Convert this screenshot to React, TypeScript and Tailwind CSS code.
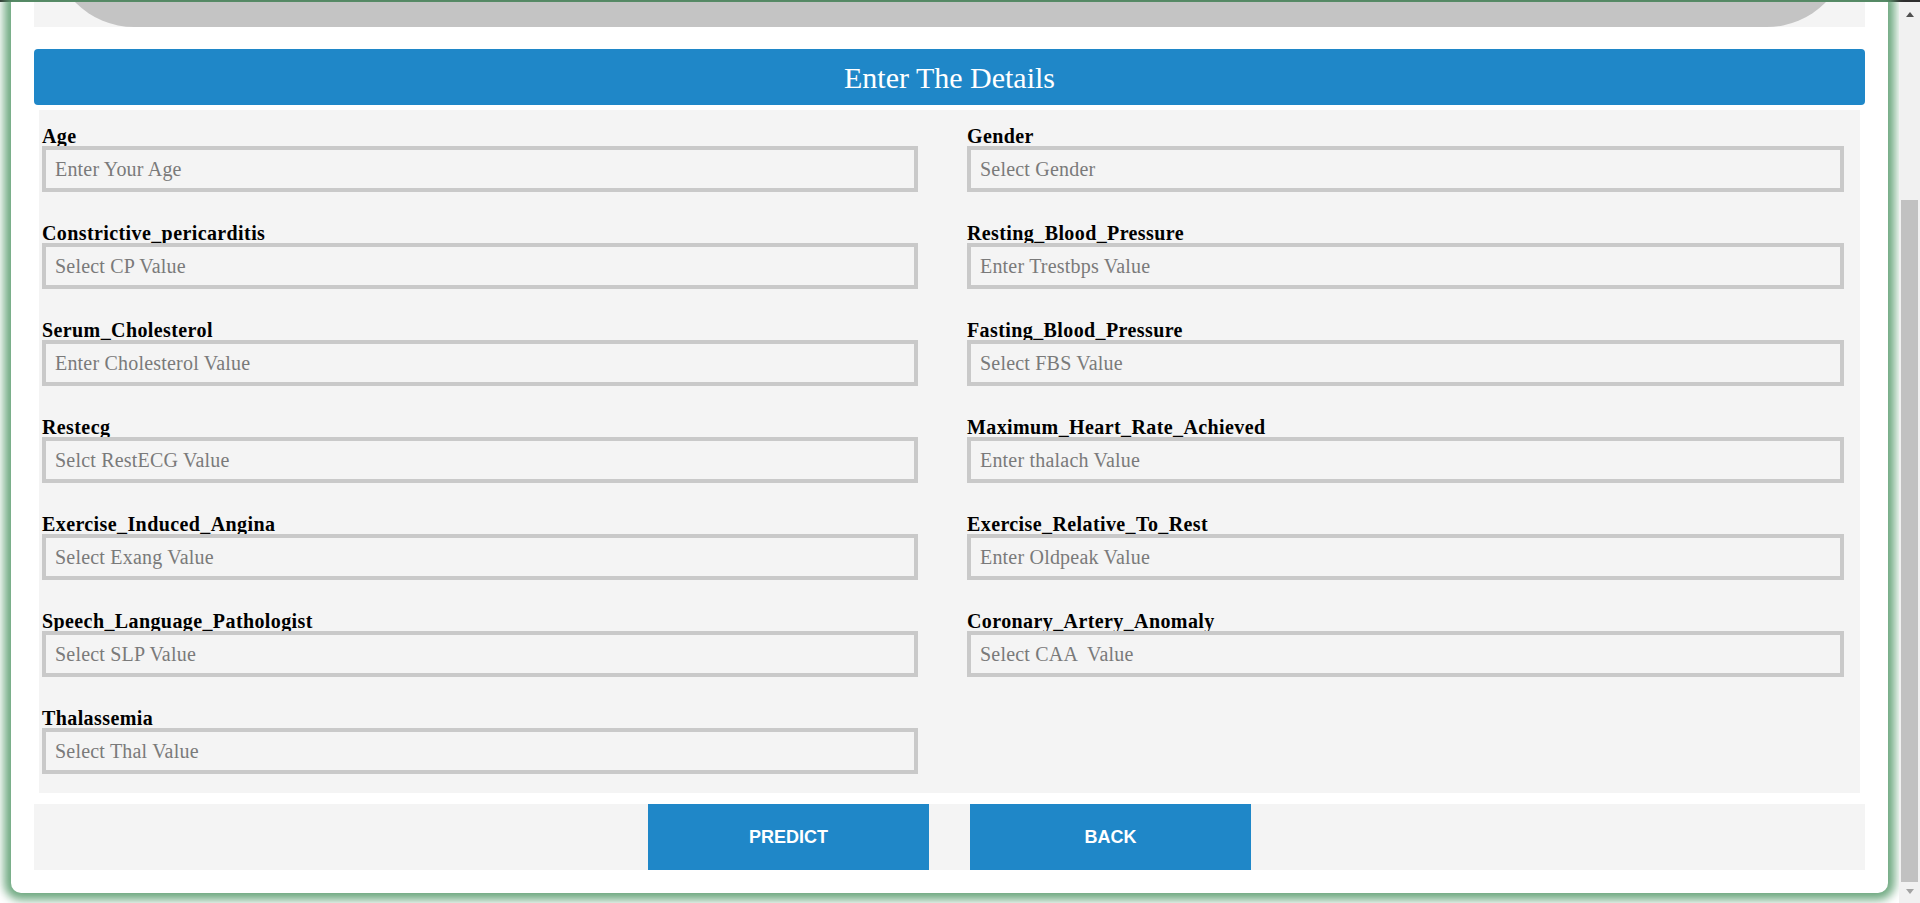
import React from "react";

const fields: [string, string][] = [
  ["Age", "Enter Your Age"],
  ["Gender", "Select Gender"],
  ["Constrictive_pericarditis", "Select CP Value"],
  ["Resting_Blood_Pressure", "Enter Trestbps Value"],
  ["Serum_Cholesterol", "Enter Cholesterol Value"],
  ["Fasting_Blood_Pressure", "Select FBS Value"],
  ["Restecg", "Selct RestECG Value"],
  ["Maximum_Heart_Rate_Achieved", "Enter thalach Value"],
  ["Exercise_Induced_Angina", "Select Exang Value"],
  ["Exercise_Relative_To_Rest", "Enter Oldpeak Value"],
  ["Speech_Language_Pathologist", "Select SLP Value"],
  ["Coronary_Artery_Anomaly", "Select CAA  Value"],
  ["Thalassemia", "Select Thal Value"],
];

export default function App() {
  return (
    <div className="w-[1920px] h-[903px] overflow-hidden bg-white flex flex-col">
      <div className="h-[2px] bg-[#2e2e2e] shrink-0" />
      <div className="flex flex-1 min-h-0">
        <div className="flex-1 bg-white px-[11px]">
          <div className="bg-white rounded-b-[10px] shadow-[0_0_10px_7px_rgba(95,160,115,0.9)] px-[23px] pb-[23px] flex flex-col">
            {/* top image box */}
            <div className="h-[25px] bg-[#f4f4f4] flex items-end overflow-hidden pl-[18px] pr-[16px]">
              <div className="h-[140px] w-full shrink-0 bg-[#c4c4c4] rounded-b-[82px]" />
            </div>
            {/* header */}
            <div className="mt-[22px] h-[56px] bg-[#1f87c8] rounded-[4px] flex items-center justify-center">
              <span className="text-white text-[30px] font-['Liberation_Serif',serif]">
                Enter The Details
              </span>
            </div>
            {/* form */}
            <div className="mt-[5px] mx-[5px] bg-[#f4f4f4] pt-[16px] pb-[19px] pl-[3px]">
              <div className="grid grid-cols-[876px_877px] gap-x-[49px] gap-y-[31px]">
                {fields.map(([label, ph]) => (
                  <div key={label} className="flex flex-col">
                    <label className="h-[20px] leading-[20px] text-[20px] tracking-[0.4px] font-bold text-black font-['Liberation_Serif',serif]">
                      {label}
                    </label>
                    <input
                      readOnly
                      placeholder={ph}
                      className="h-[46px] border-4 border-[#c9c9c9] bg-[#f4f4f4] pl-[9px] text-[20px] tracking-[0.2px] font-['Liberation_Serif',serif] placeholder:text-[#7a7a7a] outline-none"
                    />
                  </div>
                ))}
              </div>
            </div>
            {/* buttons */}
            <div className="mt-[11px] h-[66px] bg-[#f4f4f4] flex justify-center gap-[41px]">
              <button className="w-[281px] h-[66px] bg-[#1f87c8] text-white text-[18px] font-bold font-['Liberation_Sans',sans-serif]">
                PREDICT
              </button>
              <button className="w-[281px] h-[66px] bg-[#1f87c8] text-white text-[18px] font-bold font-['Liberation_Sans',sans-serif]">
                BACK
              </button>
            </div>
          </div>
        </div>
        {/* scrollbar */}
        <div className="w-[21px] bg-[#f1f1f1] flex flex-col items-center relative">
          <div className="mt-[10px] w-0 h-0 border-l-[4px] border-r-[4px] border-b-[5px] border-l-transparent border-r-transparent border-b-[#505050]" />
          <div className="mt-[183px] w-[17px] h-[682px] bg-[#c1c1c1]" />
          <div className="mt-[7px] w-0 h-0 border-l-[4px] border-r-[4px] border-t-[5px] border-l-transparent border-r-transparent border-t-[#a3a3a3]" />
        </div>
      </div>
    </div>
  );
}
